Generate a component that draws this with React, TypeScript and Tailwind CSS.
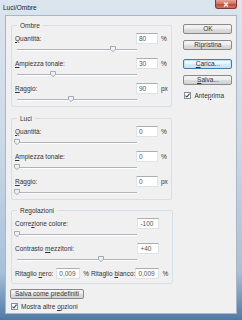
import React from 'react';

const fontCls = "font-['Liberation_Sans',Arial,sans-serif]";

function Acc({ text, at }: { text: string; at: number }) {
  if (at < 0) return <>{text}</>;
  return (
    <>
      {text.slice(0, at)}
      <span className="underline underline-offset-[1px]">{text[at]}</span>
      {text.slice(at + 1)}
    </>
  );
}

function Slider({ value }: { value: number }) {
  const x = 3 + value * 120;
  return (
    <svg width="126" height="8" className="ml-[2px] block">
      <line x1="3" y1="5.5" x2="123" y2="5.5" stroke="#b1b4b8" />
      <line x1="3" y1="6.5" x2="123" y2="6.5" stroke="#ffffff" />
      <path
        d={`M${x - 2.5} 2.5 h5 v3 l-2.5 2 l-2.5 -2 z`}
        fill="#eef1f4"
        stroke="#8f9ba7"
        strokeWidth="0.8"
      />
    </svg>
  );
}

function Field({ value, w = 'w-[22px]' }: { value: string; w?: string }) {
  return (
    <div className={`${w} h-[11px] shrink-0 bg-white border border-[#dde3e9] border-t-[#abadb3] pl-[2px] leading-[9px] text-[#555] whitespace-nowrap`}>
      {value}
    </div>
  );
}

function Row({ label, at, value, unit }: { label: string; at: number; value: string; unit: string }) {
  return (
    <div className="flex h-[11px] items-center whitespace-nowrap">
      <span className="flex-1 pl-[3px]">
        <Acc text={label} at={at} />
      </span>
      <Field value={value} />
      <span className="w-[13px] pl-[3px]">{unit}</span>
    </div>
  );
}

type Item = { label: string; at: number; value: string; unit: string; pos: number };

function Group({ title, items, children }: { title: string; items: Item[]; children?: React.ReactNode }) {
  return (
    <fieldset className="w-[161px] border border-[#d5dfe5] rounded-[2px] pt-[3px] pb-[4px] flex flex-col gap-[6px]">
      <legend className="ml-[5px] px-[3px] leading-[9px]">{title}</legend>
      {items.map((it) => (
        <div key={it.label} className="flex flex-col">
          <Row label={it.label} at={it.at} value={it.value} unit={it.unit} />
          <Slider value={it.pos} />
        </div>
      ))}
      {children}
    </fieldset>
  );
}

function Btn({ children, focus }: { children: React.ReactNode; focus?: boolean }) {
  return (
    <button
      className={`w-[49px] h-[10px] rounded-[2px] border flex items-center justify-center leading-none whitespace-nowrap ${
        focus
          ? 'border-[#3c7fb1] shadow-[inset_0_0_0_1px_#bfe4f8] bg-[linear-gradient(#f4f9fc,#e9f3f9_50%,#dae9f2_50%,#cfe1ec)]'
          : 'border-[#8a8a8a] bg-[linear-gradient(#f4f4f4,#ececec_50%,#dedede_50%,#d2d2d2)]'
      }`}
    >
      {children}
    </button>
  );
}

function Check({ children }: { children: React.ReactNode }) {
  return (
    <div className="flex items-center h-[9px] whitespace-nowrap">
      <span className="w-[7px] h-[7px] border border-[#8e8f8f] bg-white flex items-center justify-center">
        <svg width="5" height="5" viewBox="0 0 5 5">
          <path d="M0.5 2.6 L1.9 4 L4.5 0.7" stroke="#25457a" strokeWidth="1.1" fill="none" />
        </svg>
      </span>
      <span className="ml-[3px]">{children}</span>
    </div>
  );
}

export default function App() {
  const ombre: Item[] = [
    { label: 'Quantità:', at: 0, value: '80', unit: '%', pos: 0.8 },
    { label: 'Ampiezza tonale:', at: 0, value: '30', unit: '%', pos: 0.3 },
    { label: 'Raggio:', at: 0, value: '90', unit: 'px', pos: 0.45 },
  ];
  const luci: Item[] = [
    { label: 'Quantità:', at: 0, value: '0', unit: '%', pos: 0 },
    { label: 'Ampiezza tonale:', at: 0, value: '0', unit: '%', pos: 0 },
    { label: 'Raggio:', at: 0, value: '0', unit: 'px', pos: 0 },
  ];
  const regolazioni: Item[] = [
    { label: 'Correzione colore:', at: 5, value: '-100', unit: '', pos: 0 },
    { label: 'Contrasto mezzitoni:', at: 10, value: '+40', unit: '', pos: 0.7 },
  ];

  return (
    <div
      className={`${fontCls} text-[6.5px] text-[#333] w-[242px] h-[320px] flex flex-col bg-[linear-gradient(180deg,#dbe5ee_0%,#cbd9e6_45%,#a8c0d8_85%,#4f79a6_100%)] overflow-hidden`}
    >
      <div className="h-[15px] flex justify-between items-start pl-[3px] pr-[5px]">
        <span className="mt-[4px] leading-[8px] text-[6.5px] text-[#1b1b1b]">Luci/Ombre</span>
        <div className="w-[22px] h-[9px] rounded-b-[3px] border border-t-0 border-[#7b3a33] bg-[linear-gradient(#e8a293,#d2705f_50%,#c0463a_50%,#d2765f)] flex items-center justify-center">
          <svg width="6" height="5" viewBox="0 0 6 5">
            <path d="M1 0.5 L5 4.5 M5 0.5 L1 4.5" stroke="#ffffff" strokeWidth="1.3" />
          </svg>
        </div>
      </div>

      <div className="flex-1 mx-[5px] mb-[6px] bg-[#f0f0f0] border border-[#a7b7c7] flex">
        <div className="pl-[5px] pt-[5px] flex flex-col">
          <Group title="Ombre" items={ombre} />
          <div className="mt-[7px]">
            <Group title="Luci" items={luci} />
          </div>
          <div className="mt-[6px]">
            <Group title="Regolazioni" items={regolazioni}>
              <div className="flex h-[11px] items-center whitespace-nowrap">
                <span className="pl-[3px]">
                  Ritaglio <Acc text="nero:" at={0} />
                </span>
                <div className="ml-[3px]">
                  <Field value="0,009" w="w-[24px]" />
                </div>
                <span className="ml-[3px]">
                  % Ritaglio <Acc text="bianco:" at={0} />
                </span>
                <span className="flex-1" />
                <Field value="0,009" w="w-[24px]" />
                <span className="w-[13px] pl-[3px]">%</span>
              </div>
            </Group>
          </div>
          <button className="mt-[5px] -ml-[1px] w-[74px] h-[10px] rounded-[2px] border border-[#8a8a8a] bg-[linear-gradient(#f4f4f4,#ececec_50%,#dedede_50%,#d2d2d2)] flex items-center justify-center leading-none whitespace-nowrap">
            Salva come predefiniti
          </button>
          <div className="mt-[3px]">
            <Check>
              Mostra altre <Acc text="opzioni" at={0} />
            </Check>
          </div>
        </div>

        <div className="ml-[10px] pt-[8px] flex flex-col">
          <Btn>OK</Btn>
          <div className="mt-[6px]">
            <Btn>Ripristina</Btn>
          </div>
          <div className="mt-[9px]">
            <Btn focus>
              <Acc text="Carica..." at={0} />
            </Btn>
          </div>
          <div className="mt-[6px]">
            <Btn>
              <Acc text="Salva..." at={0} />
            </Btn>
          </div>
          <div className="mt-[6px] pl-[1px]">
            <Check>
              <Acc text="Anteprima" at={4} />
            </Check>
          </div>
        </div>
      </div>
    </div>
  );
}
